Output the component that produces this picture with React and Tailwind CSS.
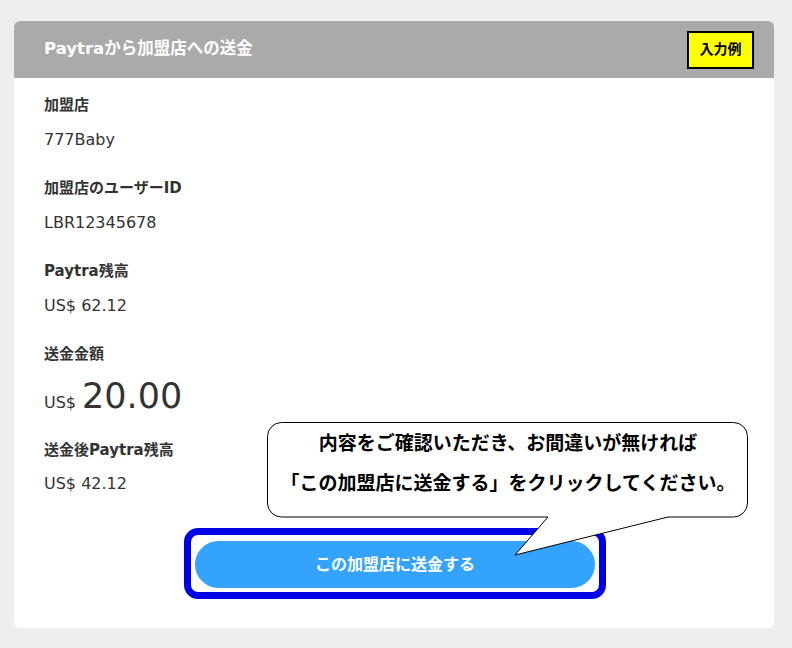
import React from "react";

const rows = [
  { label: "加盟店", value: "777Baby" },
  { label: "加盟店のユーザーID", value: "LBR12345678" },
  { label: "Paytra残高", value: "US$ 62.12" },
];

function Bubble() {
  return (
    <div className="absolute left-[253px] top-[344px] z-10 h-[134px] w-[482px]">
      <svg className="absolute inset-0" width="482" height="134" viewBox="0 0 482 134">
        <path
          d="M14.5 0.5 H466.5 A14 14 0 0 1 480.5 14.5 V81 A14 14 0 0 1 466.5 95 H401 L248 133 L281 95 H14.5 A14 14 0 0 1 0.5 81 V14.5 A14 14 0 0 1 14.5 0.5 Z"
          fill="#ffffff"
          stroke="#000000"
          strokeWidth="1"
        />
      </svg>
      <div className="relative flex flex-col items-center gap-[14px] pt-[8px] text-[19px] font-bold leading-[26px] text-black">
        <p>内容をご確認いただき、お間違いが無ければ</p>
        <p>「この加盟店に送金する」をクリックしてください。</p>
      </div>
    </div>
  );
}

export default function App() {
  return (
    <div className="min-h-[648px] bg-[#eeeeee] pl-[14px] pr-[18px] pt-[21px] pb-[20px] font-['DejaVu_Sans','Noto_Sans_CJK_JP',sans-serif] text-[#333333]">
      <section className="overflow-hidden rounded-[6px] bg-white">
        <header className="flex h-[57px] items-center justify-between bg-[#aaaaaa] pl-[30px] pr-[20px]">
          <h1 className="text-[16.5px] font-bold text-white">Paytraから加盟店への送金</h1>
          <span className="flex h-[38px] w-[67px] items-center justify-center border-2 border-black bg-[#ffff00] text-[14px] font-bold text-black">
            入力例
          </span>
        </header>

        <div className="relative px-[30px] pt-[17px] pb-[29px]">
          {rows.map((row) => (
            <div key={row.label} className="mb-[26px]">
              <p className="text-[15px] font-bold leading-[20px]">{row.label}</p>
              <p className="mt-[13px] text-[16px] leading-[24px]">{row.value}</p>
            </div>
          ))}

          <div className="mb-[17px]">
            <p className="text-[15px] font-bold leading-[20px]">送金金額</p>
            <p className="mt-[12px] flex items-baseline leading-[40px]">
              <span className="text-[16px]">US$</span>
              <span className="ml-[6px] text-[35px]">20.00</span>
            </p>
          </div>

          <div>
            <p className="text-[15px] font-bold leading-[20px]">送金後Paytra残高</p>
            <p className="mt-[12px] text-[16px] leading-[24px]">US$ 42.12</p>
          </div>

          <Bubble />

          <div className="mt-[32px] flex justify-center">
            <div className="ml-[2px] rounded-[14px] border-[7px] border-[#0000e6] px-[4px] pt-[6px] pb-[4px]">
              <button
                type="button"
                className="h-[47px] w-[400px] rounded-full bg-[#33a3ff] text-[16px] font-bold text-white"
              >
                この加盟店に送金する
              </button>
            </div>
          </div>
        </div>
      </section>
    </div>
  );
}
